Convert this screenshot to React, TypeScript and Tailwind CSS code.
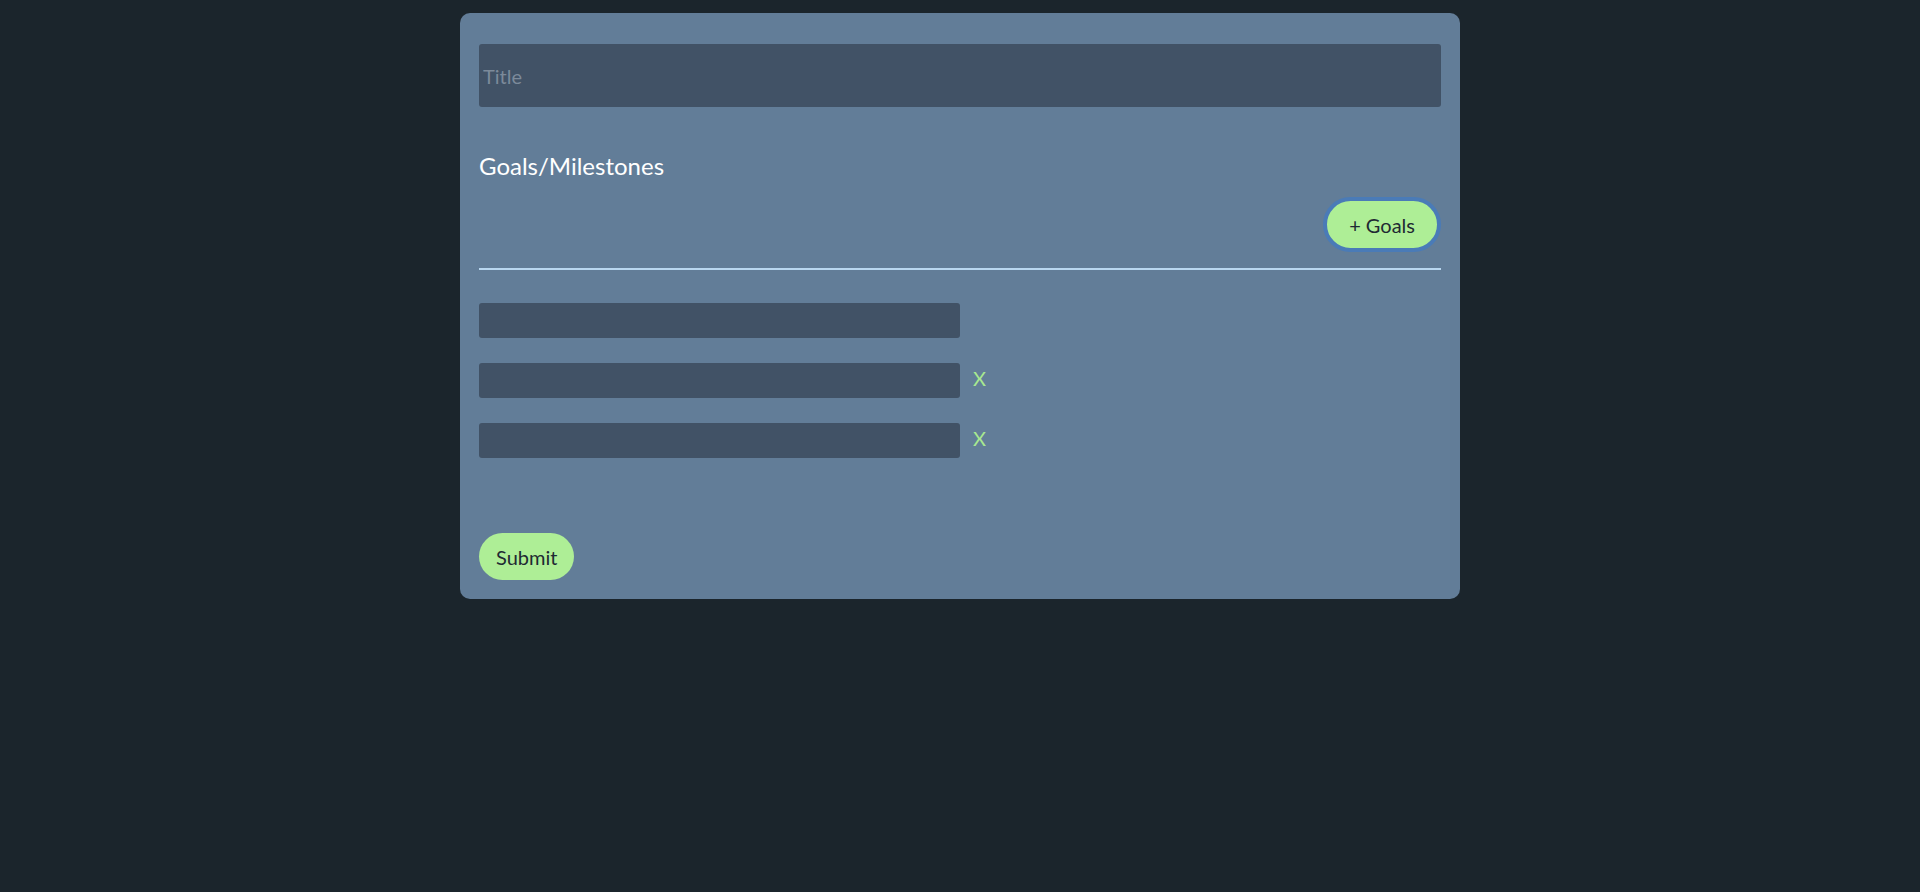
import React from "react";

export default function App() {
  const goals = [false, true, true];
  return (
    <div className="min-h-[892px] w-full bg-[#1b252c] pt-[13px] font-['Lato','Noto_Sans',sans-serif]">
      <form
        className="mx-auto flex w-[1000px] flex-col rounded-[10px] bg-[#627d98] px-[19px] pt-[31px] pb-[19px]"
        onSubmit={(e) => e.preventDefault()}
      >
        <input
          type="text"
          placeholder="Title"
          className="h-[63px] w-full rounded-[3px] bg-[#415266] px-[4px] text-[20px] text-white outline-none placeholder:text-[#7c8a9a]"
        />
        <h2 className="mt-[43px] text-[24px] leading-[32px] text-white">Goals/Milestones</h2>
        <div className="mt-[15px] flex justify-end">
          <button
            type="button"
            className="h-[55px] rounded-full border-[4px] border-[#4a7bb7] bg-[#aeee96] px-[22px] text-[20px] text-[#1f2a33]"
          >
            + Goals
          </button>
        </div>
        <div className="mt-[16px] h-[2px] w-full bg-[#b9d7f0]" />
        <div className="mt-[33px] flex flex-col gap-[25px]">
          {goals.map((removable, i) => (
            <div key={i} className="flex items-center">
              <input
                type="text"
                className="h-[35px] w-[481px] rounded-[3px] bg-[#415266] px-[4px] text-[16px] text-white outline-none"
              />
              {removable && (
                <span className="ml-[13px] -mt-[6px] text-[20px] leading-none text-[#a8e890]">X</span>
              )}
            </div>
          ))}
        </div>
        <div className="mt-[75px]">
          <button
            type="submit"
            className="h-[47px] rounded-full bg-[#aeee96] px-[17px] text-[20px] text-[#1f2a33]"
          >
            Submit
          </button>
        </div>
      </form>
    </div>
  );
}
